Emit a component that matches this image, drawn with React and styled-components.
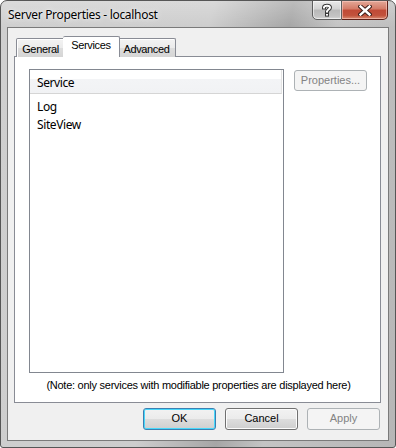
import React from "react";
import styled, { createGlobalStyle, css } from "styled-components";

const Global = createGlobalStyle`
  html, body { margin: 0; padding: 0; background: #ffffff; }
  * { box-sizing: border-box; }
`;

const Win = styled.div`
  width: 396px;
  height: 448px;
  border: 1px solid #565656;
  border-radius: 7px 7px 3px 3px;
  background:
    linear-gradient(180deg, rgba(255,255,255,0.25) 0px, rgba(255,255,255,0) 26px),
    linear-gradient(100deg, #cfcfcf 0%, #cdcdcd 45%, #a6a6a6 62%, #c4c4c4 72%, #b6b6b6 100%);
  display: flex;
  flex-direction: column;
  padding: 0 6px 6px;
  overflow: hidden;
`;

const TitleBar = styled.div`
  height: 26px;
  display: flex;
  justify-content: space-between;
  align-items: flex-start;
  flex: none;
`;

const Title = styled.div`
  font: 12px/16px "Noto Sans", "Open Sans", sans-serif;
  letter-spacing: -0.3px;
  color: #000;
  margin-top: 6px;
  padding-left: 1px;
  text-shadow: 0 0 6px rgba(255,255,255,0.9), 0 0 2px rgba(255,255,255,0.8);
`;

const Caption = styled.div`
  display: flex;
  margin-top: -1px;
  margin-right: 1px;
`;

const CapBtn = styled.div`
  height: 20px;
  display: flex;
  align-items: center;
  justify-content: center;
  ${(p) =>
    p.$close
      ? css`
          width: 46px;
          border: 1px solid #5e2018;
          border-left: none;
          border-radius: 0 0 5px 0;
          background: linear-gradient(180deg, #e3a898 0%, #d37a66 45%, #c04a36 50%, #c2523c 80%, #d88c72 100%);
          box-shadow: inset 0 0 0 1px rgba(255,210,200,0.55);
        `
      : css`
          width: 30px;
          border: 1px solid #5f5f5f;
          border-radius: 0 0 0 5px;
          background: linear-gradient(180deg, #eaeaea 0%, #d3d3d3 45%, #b9b9b9 50%, #c3c3c3 85%, #d8d8d8 100%);
          box-shadow: inset 0 0 0 1px rgba(255,255,255,0.55);
        `}
`;

const Client = styled.div`
  flex: 1;
  border: 1px solid #7a7a7a;
  background: #f0f0f0;
  display: flex;
  flex-direction: column;
  padding: 9px 7px 0 6px;
`;

const TabStrip = styled.div`
  display: flex;
  align-items: flex-end;
  height: 20px;
  padding-left: 2px;
  position: relative;
  z-index: 1;
  margin-bottom: -1px;
`;

const Tab = styled.div`
  font: 11px/1 "Liberation Sans", Arial, sans-serif;
  letter-spacing: -0.35px;
  color: #000;
  display: flex;
  align-items: center;
  justify-content: center;
  border: 1px solid #898c95;
  border-bottom: none;
  width: ${(p) => p.$w}px;
  ${(p) =>
    p.$active
      ? css`
          height: 21px;
          margin: 0 -2px;
          background: #fff;
          border-radius: 2px 2px 0 0;
          padding-bottom: 4px;
          position: relative;
          z-index: 2;
        `
      : css`
          height: 19px;
          background: linear-gradient(180deg, #f3f3f3 0%, #ebebeb 50%, #dddddd 51%, #d5d5d5 100%);
          box-shadow: inset 1px 1px 0 #fff;
          padding-top: 2px;
          border-radius: 2px 2px 0 0;
          & + & { border-left: none; }
        `}
`;

const Panel = styled.div`
  height: 347px;
  border: 1px solid #898c95;
  background: #fff;
  display: flex;
  flex-direction: column;
  padding: 12px 0 0 14px;
`;

const TopRow = styled.div`
  display: flex;
  align-items: flex-start;
  gap: 10px;
`;

const ListBox = styled.div`
  width: 255px;
  height: 304px;
  border: 1px solid #828790;
  background: #fff;
  display: flex;
  flex-direction: column;
`;

const ListHeader = styled.div`
  height: 24px;
  margin-right: 1px;
  display: flex;
  align-items: center;
  padding: 2px 0 0 7px;
  font: 12px/1 "Noto Sans", "Open Sans", sans-serif;
  letter-spacing: -0.4px;
  color: #000;
  background: linear-gradient(180deg, #ffffff 0%, #ffffff 40%, #f3f4f6 41%, #f1f2f4 100%);
  border-bottom: 1px solid #d5d5d5;
  border-right: 1px solid #e3e3e3;
`;

const ListBody = styled.div`
  display: flex;
  flex-direction: column;
  padding-top: 4px;
`;

const ListRow = styled.div`
  height: 18px;
  display: flex;
  align-items: center;
  padding-left: 7px;
  font: 12px/1 "Noto Sans", "Open Sans", sans-serif;
  letter-spacing: -0.4px;
  color: #000;
`;

const Btn = styled.button`
  width: 73px;
  height: ${(p) => p.$h || 22}px;
  margin-top: ${(p) => p.$mt || 0}px;
  padding: 0 0 1px;
  font: 11px/1 "Liberation Sans", Arial, sans-serif;
  border-radius: 3px;
  cursor: default;
  ${(p) =>
    p.disabled
      ? css`
          color: #838383;
          border: 1px solid #adb2b5;
          background: #f4f4f4;
        `
      : css`
          color: #000;
          border: 1px solid ${p.$default ? "#3c7fb1" : "#707070"};
          background: linear-gradient(180deg, #f2f2f2 0%, #ebebeb 50%, #dddddd 51%, #cfcfcf 100%);
          box-shadow: inset 0 0 0 1px ${p.$default ? "#48d8fb" : "#fcfcfc"};
        `}
`;

const Note = styled.div`
  margin-top: 3px;
  margin-left: -12px;
  text-align: center;
  font: 11px/18px "Liberation Sans", Arial, sans-serif;
  letter-spacing: -0.26px;
  color: #000;
`;

const ButtonRow = styled.div`
  display: flex;
  justify-content: flex-end;
  gap: 9px;
  padding: 5px 1px 0 0;
`;

const HelpIcon = () => (
  <svg width="12" height="14" viewBox="0 0 12 14">
    <path d="M3 4.5 C3 2 9 2 9 4.6 C9 6.5 6 6.6 6 8.6" fill="none" stroke="#3a3a3a" strokeWidth="4" strokeLinecap="square" />
    <rect x="4" y="10" width="4" height="3.6" fill="#3a3a3a" />
    <path d="M3 4.5 C3 2 9 2 9 4.6 C9 6.5 6 6.6 6 8.6" fill="none" stroke="#fff" strokeWidth="2" strokeLinecap="square" />
    <rect x="5" y="11" width="2" height="1.6" fill="#fff" />
  </svg>
);

const CloseIcon = () => (
  <svg width="14" height="11" viewBox="0 0 14 11">
    <path d="M2.5 1.5 L11.5 9.5 M11.5 1.5 L2.5 9.5" stroke="#3b1f1a" strokeWidth="4.4" strokeLinecap="square" />
    <path d="M2.5 1.5 L11.5 9.5 M11.5 1.5 L2.5 9.5" stroke="#fff" strokeWidth="2.4" strokeLinecap="square" />
  </svg>
);

export default function App() {
  return (
    <>
      <Global />
      <Win>
        <TitleBar>
          <Title>Server Properties - localhost</Title>
          <Caption>
            <CapBtn><HelpIcon /></CapBtn>
            <CapBtn $close><CloseIcon /></CapBtn>
          </Caption>
        </TitleBar>
        <Client>
          <TabStrip>
            <Tab $w={49}>General</Tab>
            <Tab $w={57} $active>Services</Tab>
            <Tab $w={58}>Advanced</Tab>
          </TabStrip>
          <Panel>
            <TopRow>
              <ListBox>
                <ListHeader>Service</ListHeader>
                <ListBody>
                  <ListRow>Log</ListRow>
                  <ListRow>SiteView</ListRow>
                </ListBody>
              </ListBox>
              <Btn disabled $h={21} $mt={1}>Properties...</Btn>
            </TopRow>
            <Note>(Note: only services with modifiable properties are displayed here)</Note>
          </Panel>
          <ButtonRow>
            <Btn $default>OK</Btn>
            <Btn>Cancel</Btn>
            <Btn disabled>Apply</Btn>
          </ButtonRow>
        </Client>
      </Win>
    </>
  );
}
